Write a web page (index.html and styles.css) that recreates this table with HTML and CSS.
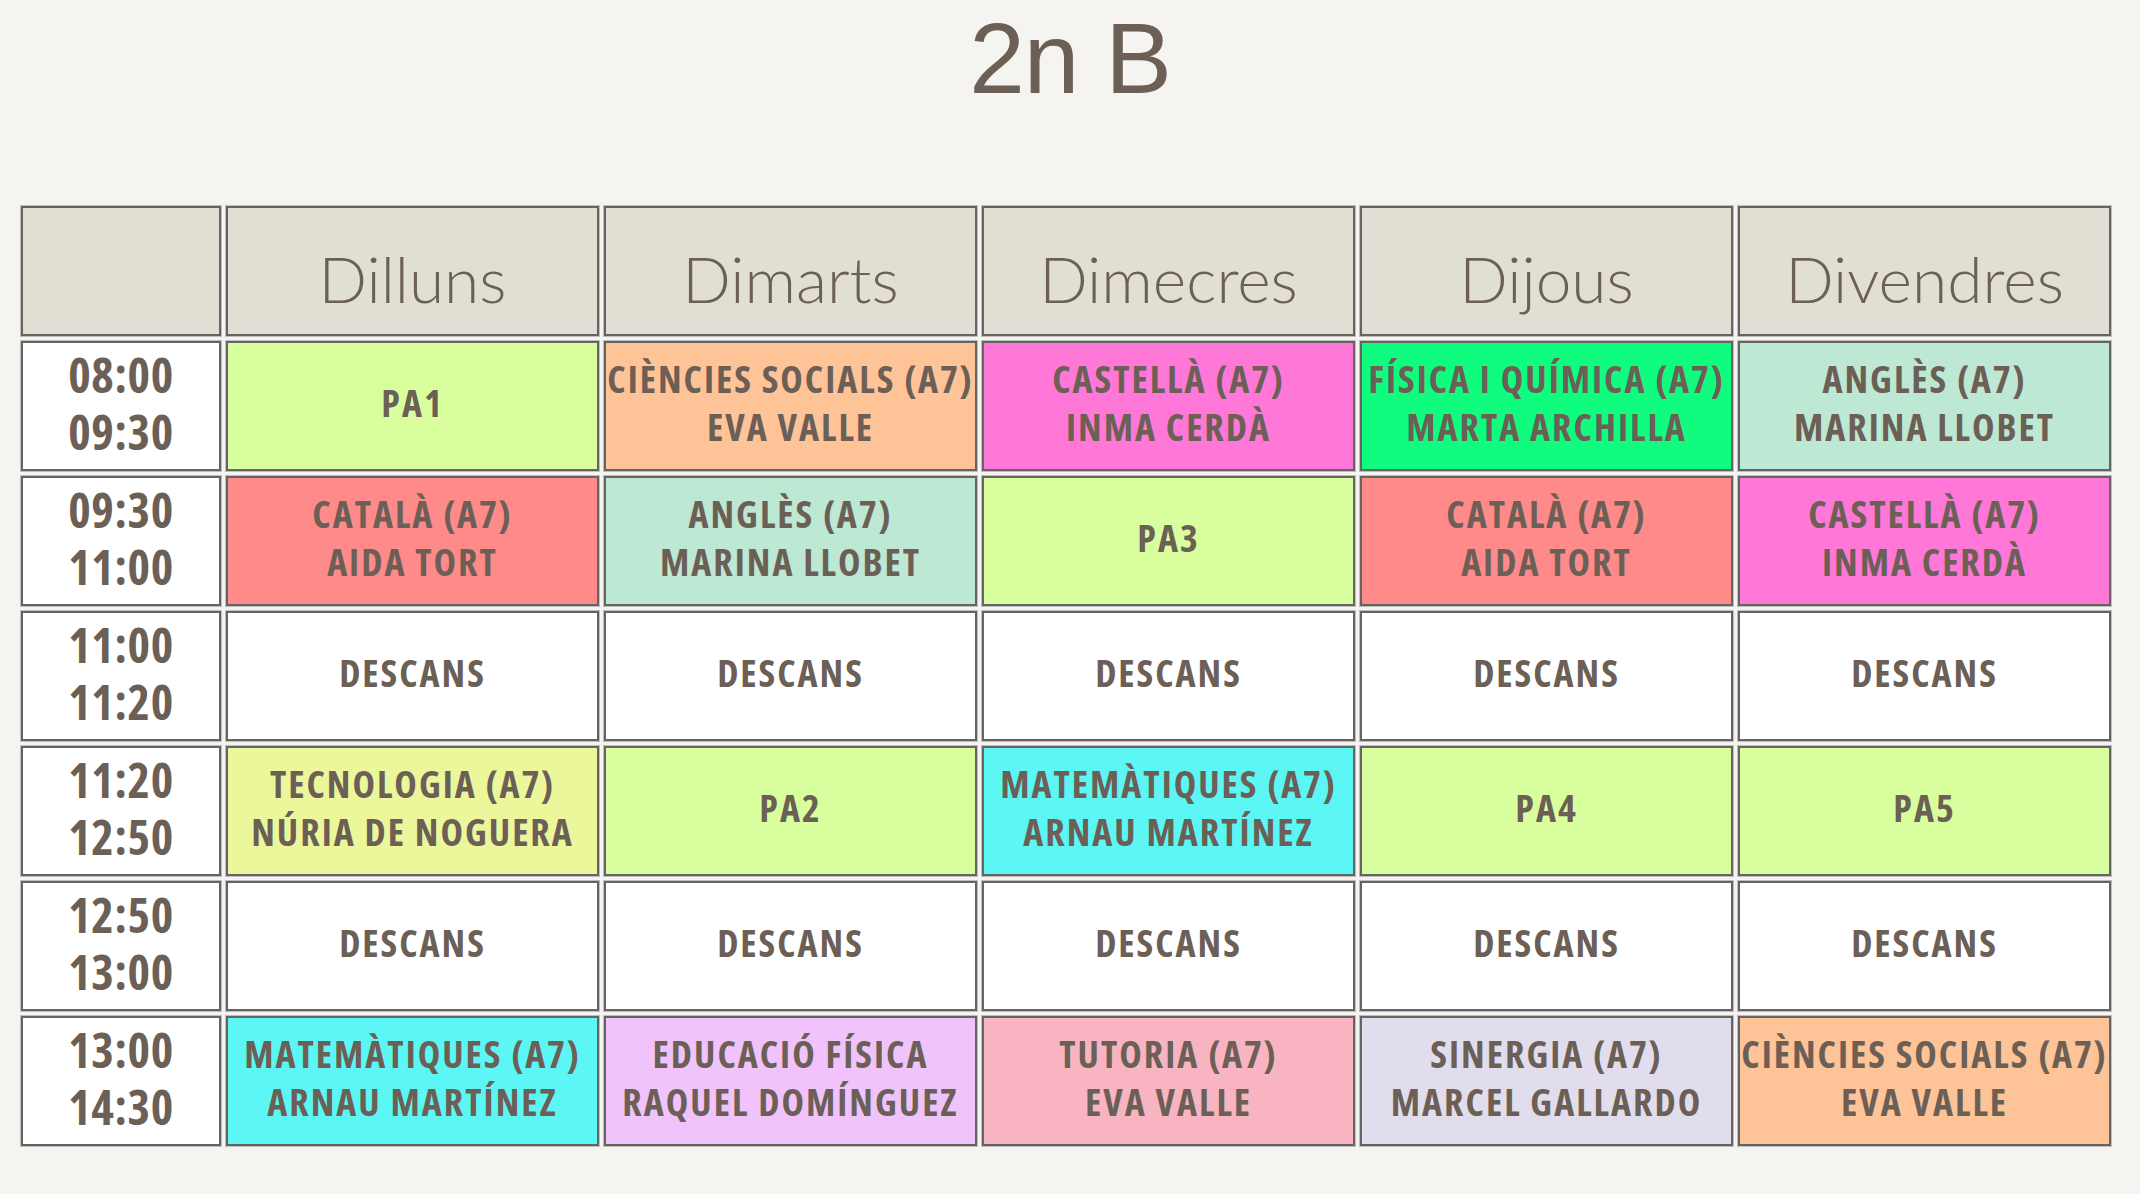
FILE: index.html
```html
<!DOCTYPE html>
<html lang="ca">
<head>
<meta charset="utf-8">
<title>2n B</title>
<link rel="stylesheet" href="styles.css">
</head>
<body>
<h1 class="title">2n B</h1>
<div class="timetable">
  <div class="cell head"></div>
  <div class="cell head"><span>Dilluns</span></div>
  <div class="cell head"><span>Dimarts</span></div>
  <div class="cell head"><span>Dimecres</span></div>
  <div class="cell head"><span>Dijous</span></div>
  <div class="cell head"><span>Divendres</span></div>

  <div class="cell time"><span>08:00</span><span>09:30</span></div>
  <div class="cell subj pa"><span>PA1</span></div>
  <div class="cell subj soc"><span>CIÈNCIES SOCIALS (A7)</span><span>EVA VALLE</span></div>
  <div class="cell subj cast"><span>CASTELLÀ (A7)</span><span>INMA CERDÀ</span></div>
  <div class="cell subj fq"><span>FÍSICA I QUÍMICA (A7)</span><span>MARTA ARCHILLA</span></div>
  <div class="cell subj ang"><span>ANGLÈS (A7)</span><span>MARINA LLOBET</span></div>

  <div class="cell time"><span>09:30</span><span>11:00</span></div>
  <div class="cell subj cat"><span>CATALÀ (A7)</span><span>AIDA TORT</span></div>
  <div class="cell subj ang"><span>ANGLÈS (A7)</span><span>MARINA LLOBET</span></div>
  <div class="cell subj pa"><span>PA3</span></div>
  <div class="cell subj cat"><span>CATALÀ (A7)</span><span>AIDA TORT</span></div>
  <div class="cell subj cast"><span>CASTELLÀ (A7)</span><span>INMA CERDÀ</span></div>

  <div class="cell time"><span>11:00</span><span>11:20</span></div>
  <div class="cell subj brk"><span>DESCANS</span></div>
  <div class="cell subj brk"><span>DESCANS</span></div>
  <div class="cell subj brk"><span>DESCANS</span></div>
  <div class="cell subj brk"><span>DESCANS</span></div>
  <div class="cell subj brk"><span>DESCANS</span></div>

  <div class="cell time"><span>11:20</span><span>12:50</span></div>
  <div class="cell subj tec"><span>TECNOLOGIA (A7)</span><span>NÚRIA DE NOGUERA</span></div>
  <div class="cell subj pa"><span>PA2</span></div>
  <div class="cell subj mat"><span>MATEMÀTIQUES (A7)</span><span>ARNAU MARTÍNEZ</span></div>
  <div class="cell subj pa"><span>PA4</span></div>
  <div class="cell subj pa"><span>PA5</span></div>

  <div class="cell time"><span>12:50</span><span>13:00</span></div>
  <div class="cell subj brk"><span>DESCANS</span></div>
  <div class="cell subj brk"><span>DESCANS</span></div>
  <div class="cell subj brk"><span>DESCANS</span></div>
  <div class="cell subj brk"><span>DESCANS</span></div>
  <div class="cell subj brk"><span>DESCANS</span></div>

  <div class="cell time"><span>13:00</span><span>14:30</span></div>
  <div class="cell subj mat"><span>MATEMÀTIQUES (A7)</span><span>ARNAU MARTÍNEZ</span></div>
  <div class="cell subj ef"><span>EDUCACIÓ FÍSICA</span><span>RAQUEL DOMÍNGUEZ</span></div>
  <div class="cell subj tut"><span>TUTORIA (A7)</span><span>EVA VALLE</span></div>
  <div class="cell subj sin"><span>SINERGIA (A7)</span><span>MARCEL GALLARDO</span></div>
  <div class="cell subj soc"><span>CIÈNCIES SOCIALS (A7)</span><span>EVA VALLE</span></div>
</div>
</body>
</html>
```

FILE: styles.css
```css
html, body {
  margin: 0;
  padding: 0;
}

body {
  background: #f5f4f0;
  color: #6b5f56;
  width: 2140px;
  height: 1194px;
  overflow: hidden;
}

.title {
  margin: 0 0 98px 0;
  padding-top: 8px;
  height: 100px;
  line-height: 100px;
  font-family: "Liberation Sans", Arial, sans-serif;
  font-weight: 400;
  font-size: 100px;
  text-align: center;
  letter-spacing: -1px;
}

.timetable {
  display: grid;
  grid-template-columns: 200px repeat(5, 373px);
  grid-auto-rows: 130px;
  gap: 5px;
  margin-left: 21px;
}

.cell {
  box-sizing: border-box;
  border: 2px solid #646464;
  box-shadow: 0 0 0 1px rgba(90, 90, 90, 0.35);
  background: #ffffff;
  display: flex;
  flex-direction: column;
  align-items: center;
  justify-content: center;
  text-align: center;
  white-space: nowrap;
}

.head {
  background: #e1dfd4;
  font-family: Lato, "Open Sans", sans-serif;
  font-weight: 300;
  font-size: 64px;
  padding-top: 14px;
}

.time {
  font-family: "Open Sans", "Liberation Sans", sans-serif;
  font-stretch: 75%;
  font-weight: 700;
  font-size: 48px;
  letter-spacing: 0.6px;
  line-height: 57px;
  padding-bottom: 6px;
}

.subj {
  font-family: "Open Sans", "Liberation Sans", sans-serif;
  font-stretch: 75%;
  font-weight: 700;
  font-size: 38px;
  letter-spacing: 2px;
  line-height: 48px;
  padding-bottom: 9px;
}

.pa   { background: #d9fe9d; }
.soc  { background: #ffc398; }
.cast { background: #ff78d7; }
.fq   { background: #10fc7f; }
.ang  { background: #bde8d3; }
.cat  { background: #ff8a8a; }
.brk  { background: #ffffff; }
.tec  { background: #ebf79a; }
.mat  { background: #5cf6f5; }
.ef   { background: #f0c3fc; }
.tut  { background: #f9b4c2; }
.sin  { background: #e2dded; }
```
